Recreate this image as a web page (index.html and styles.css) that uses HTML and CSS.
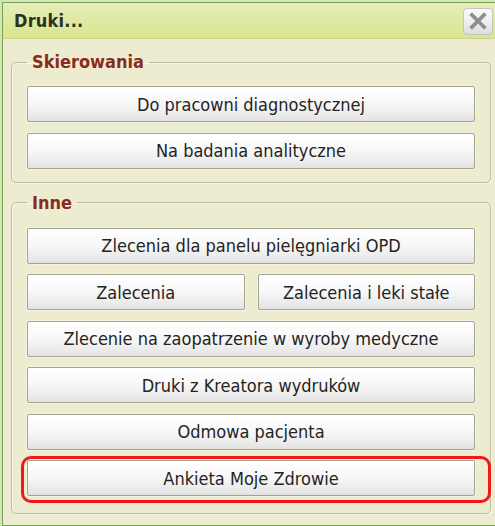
FILE: index.html
```html
<!DOCTYPE html>
<html lang="pl">
<head>
<meta charset="utf-8">
<title>Druki...</title>
<link rel="stylesheet" href="styles.css">
</head>
<body>
<div class="dialog">
  <div class="titlebar">
    <span class="title">Druki...</span>
    <button class="close" aria-label="Zamknij">
      <svg width="20" height="20" viewBox="0 0 20 20"><path d="M4 4 L16 16 M16 4 L4 16" stroke="#8e8e8e" stroke-width="3.8" stroke-linecap="square"/></svg>
    </button>
  </div>
  <div class="content">
    <fieldset class="group">
      <legend>Skierowania</legend>
      <div class="list">
        <button class="btn">Do pracowni diagnostycznej</button>
        <button class="btn">Na badania analityczne</button>
      </div>
    </fieldset>
    <fieldset class="group group-other">
      <legend>Inne</legend>
      <div class="list">
        <button class="btn">Zlecenia dla panelu pielęgniarki OPD</button>
        <div class="pair">
          <button class="btn">Zalecenia</button>
          <button class="btn">Zalecenia i leki stałe</button>
        </div>
        <button class="btn">Zlecenie na zaopatrzenie w wyroby medyczne</button>
        <button class="btn">Druki z Kreatora wydruków</button>
        <button class="btn">Odmowa pacjenta</button>
        <div class="highlight">
          <button class="btn">Ankieta Moje Zdrowie</button>
        </div>
      </div>
    </fieldset>
  </div>
</div>
</body>
</html>
```
FILE: styles.css
```css
html, body {
  margin: 0;
  height: 100%;
}
body {
  background: #d3e6b6;
  padding: 2px 0 0 2px;
  box-sizing: border-box;
  overflow: hidden;
  font-family: "DejaVu Sans Condensed", "DejaVu Sans", sans-serif;
}
.dialog {
  width: 498px;
  height: 100%;
  box-sizing: border-box;
  border: 1px solid #79a050;
  background: #edecd0;
}
.titlebar {
  height: 35px;
  border-bottom: 1px solid #c9d38e;
  background: linear-gradient(180deg, #e6edbb 0%, #dfe9a4 50%, #d9e68f 100%);
  display: flex;
  align-items: center;
  justify-content: space-between;
  padding: 0 6px 0 11px;
}
.title {
  font-weight: bold;
  font-size: 18px;
  color: #2f3122;
  letter-spacing: 0.2px;
}
.close {
  width: 30px;
  height: 27px;
  margin-top: 1px;
  padding: 0;
  border: 1px solid #c4c4c0;
  border-radius: 4px;
  background: linear-gradient(180deg, #fbfbfb 0%, #ececec 60%, #dcdcdc 100%);
  display: flex;
  align-items: center;
  justify-content: center;
}
.content {
  padding: 13px 8px 0 8px;
}
.group {
  margin: 0;
  padding: 14px 15px 13px 15px;
  border: 1px solid #bfbe9b;
  border-radius: 5px;
  box-shadow: inset 1px 1px 0 #f7f6e6, 1px 1px 0 #f7f6e6;
}
.group-other {
  margin-top: 10px;
  padding-top: 15px;
  padding-bottom: 17px;
}
legend {
  padding: 0 5px;
  font-weight: bold;
  font-size: 18px;
  line-height: 20px;
  color: #8b2b1e;
}
.list {
  display: flex;
  flex-direction: column;
  gap: 10.5px;
}
.pair {
  display: grid;
  grid-template-columns: 1fr 1fr;
  column-gap: 13px;
}
.btn {
  display: block;
  width: 100%;
  height: 36px;
  margin: 0;
  padding: 0 4px;
  border: 1px solid #a3a38e;
  border-radius: 2px;
  background: linear-gradient(180deg, #ffffff 0%, #f8f8f8 45%, #ececec 80%, #e2e2e2 100%);
  box-shadow: 0 0 0 1px #f4f3e2;
  font-family: "DejaVu Sans Condensed", "DejaVu Sans", sans-serif;
  font-size: 18px;
  color: #24241f;
  text-align: center;
  white-space: nowrap;
}
.highlight {
  position: relative;
}
.highlight::after {
  content: "";
  position: absolute;
  left: -6px;
  right: -16px;
  top: -4px;
  bottom: -7px;
  border: 3px solid #f01818;
  border-radius: 10px;
  pointer-events: none;
}
```
